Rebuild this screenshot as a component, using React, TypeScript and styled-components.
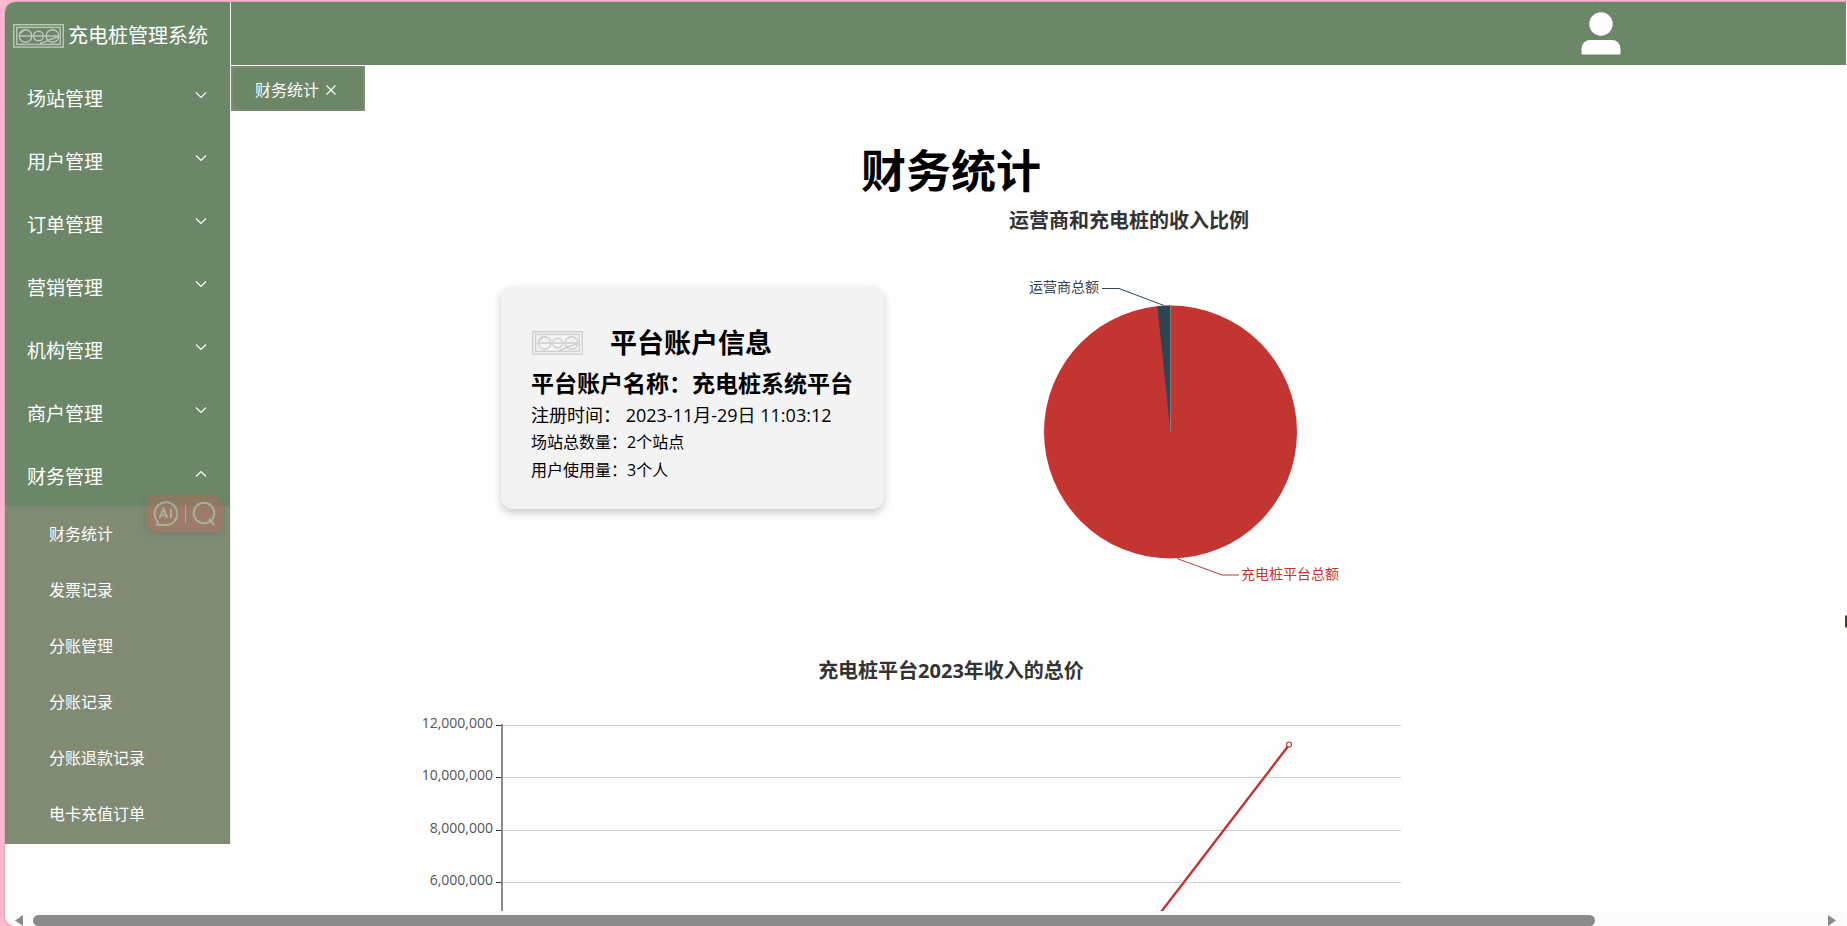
import React from 'react';
import styled, { createGlobalStyle } from 'styled-components';

const GlobalStyle = createGlobalStyle`
  *, *::before, *::after { box-sizing: border-box; }
  body {
    margin: 0;
    background: #ffb8cf;
    color: #000;
    font-family: "Open Sans", "Noto Sans CJK SC", sans-serif;
    font-size: 16px;
  }
  button { font: inherit; color: inherit; background: none; border: 0; padding: 0; cursor: pointer; }
  a { color: inherit; text-decoration: none; }
  h1, h2, h3, p, ul { margin: 0; padding: 0; }
  ul { list-style: none; }
`;

const green = '#6b8768';
const olive = '#818b74';

const Page = styled.div`
  height: 100vh;
  padding: 2px 0 0 5px;
`;

const Window = styled.div`
  display: flex;
  flex-direction: column;
  height: 100%;
  padding-right: 1px;
  overflow: hidden;
  background: #fefefe;
  border-radius: 10px 0 0 10px;
  box-shadow: 0 0 2px rgba(0, 0, 0, 0.35);
`;

const Shell = styled.div`
  display: flex;
  flex: 1;
  min-height: 0;
  overflow: hidden;
`;

const Sidebar = styled.aside`
  position: relative;
  flex: none;
  align-self: flex-start;
  width: 226px;
  border-right: 1px solid #f0eeec;
  background: ${green};
  background-clip: padding-box;
  color: #fff;
`;

const Brand = styled.div`
  display: flex;
  align-items: center;
  gap: 4px;
  height: 63px;
  padding: 4px 0 0 8px;
  font-size: 20px;
  line-height: 28px;
`;

const MenuButton = styled.button`
  display: flex;
  align-items: flex-start;
  justify-content: space-between;
  width: 100%;
  height: 63px;
  padding: 20px 23px 0 22px;
  font-size: 19px;
  line-height: 28px;
  text-align: left;

  svg { margin-top: 4px; }
`;

const SubMenu = styled.ul`
  padding-bottom: 2px;
  background: ${olive};
`;

const SubLink = styled.a`
  display: block;
  height: 56px;
  padding-left: 44px;
  line-height: 56px;
`;

const Assist = styled.div`
  position: absolute;
  right: 7px;
  top: 493px;
  display: flex;
  align-items: center;
  justify-content: space-between;
  width: 76px;
  height: 37px;
  padding: 0 7px 0 6px;
  border-radius: 3px 11px 8px 10px;
  background: rgba(240, 80, 68, 0.25);
  color: rgba(165, 195, 172, 0.75);
  box-shadow: 0 3px 8px rgba(80, 90, 60, 0.2);
`;

const AssistButton = styled.button`
  display: block;
  line-height: 0;
`;

const AssistDivider = styled.span`
  width: 1px;
  height: 18px;
  background: currentColor;
`;

const Column = styled.div`
  flex: 1;
  min-width: 0;
  display: flex;
  flex-direction: column;
`;

const TopBar = styled.header`
  display: flex;
  flex: none;
  align-items: center;
  justify-content: flex-end;
  height: 63px;
  padding-right: 225px;
  background: ${green};
`;

const UserButton = styled.button`
  display: block;
  line-height: 0;
`;

const Tabs = styled.nav`
  display: flex;
  flex: none;
  padding-top: 1px;
`;

const Tab = styled.div`
  display: flex;
  align-items: center;
  gap: 6px;
  width: 134px;
  height: 45px;
  padding: 2px 0 0 22px;
  border: 2px solid ${olive};
  background: ${green};
  color: #fff;
  line-height: 24px;
`;

const CloseButton = styled.button`
  line-height: 0;
`;

const Content = styled.main`
  max-width: 1440px;
  padding-top: 35px;
  overflow: hidden;
`;

const Title = styled.h1`
  font-size: 45px;
  line-height: 50px;
  text-align: center;
`;

const Overview = styled.section`
  display: flex;
  align-items: center;
  justify-content: center;
  gap: 55px;
`;

const Card = styled.article`
  width: 383px;
  height: 223px;
  padding: 36px 0 25px 30px;
  border-radius: 12px;
  background: #f3f3f3;
  box-shadow: 0 4px 8px rgba(0, 0, 0, 0.2);
  white-space: nowrap;
`;

const CardHead = styled.div`
  display: flex;
  align-items: center;
  gap: 27px;
  padding-left: 1px;
`;

const CardTitle = styled.h2`
  font-size: 27px;
  line-height: 42px;
`;

const AccountName = styled.h3`
  font-size: 23px;
  line-height: 38px;
`;

const Registered = styled.p`
  font-size: 18px;
  line-height: 26px;
  white-space: pre;
`;

const Fact = styled.p`
  line-height: 28px;
`;

const Chart = styled.svg`
  display: block;
  flex: none;
`;

const ChartTitle = styled.text`
  fill: #333;
  font-size: 20px;
  font-weight: 700;
  text-anchor: middle;
`;

const ChartLabel = styled.text`
  font-size: 14px;
`;

const Trend = styled.section`
  display: flex;
  justify-content: center;
  padding-top: 47px;
`;

const ScrollBar = styled.div`
  display: flex;
  flex: none;
  align-items: flex-end;
  gap: 10px;
  height: 15px;
  padding: 0 10px;
  background: #fcfcfc;
`;

const Track = styled.div`
  display: flex;
  flex: 1;
`;

const Thumb = styled.div`
  flex: 7;
  height: 11px;
  border-radius: 6px;
  background: #8b8b8b;
`;

const ThumbRest = styled.div`
  flex: 1;
`;

const EdgeHandle = styled.div`
  position: fixed;
  right: 0;
  top: 615px;
  width: 2px;
  height: 13px;
  border-radius: 2px 0 0 2px;
  background: #4a3833;
`;

function Logo({ color }: { color: string }) {
  return (
    <svg width="51" height="24" viewBox="0 0 51 24" fill="none" stroke={color} strokeWidth="1.4" aria-hidden="true">
      <rect x="0.7" y="0.7" width="49.6" height="22.4" />
      <rect x="3.7" y="3.4" width="43.6" height="17" />
      <circle cx="12.5" cy="12" r="6.3" />
      <circle cx="25.5" cy="12" r="4.8" />
      <circle cx="39.5" cy="12" r="6.3" />
      <path d="M6 12H46M6.5 10L12 5.5M27 19.5C32 18.5 39 14 46 12.5" />
    </svg>
  );
}

function Chevron({ up }: { up?: boolean }) {
  return (
    <svg width="12" height="12" viewBox="0 0 12 12" fill="none" stroke="#fff" strokeWidth="1.1" aria-hidden="true">
      <path d={up ? 'M1 9.5L6 4.5L11 9.5' : 'M1 3.5L6 8.5L11 3.5'} />
    </svg>
  );
}

const menus = ['场站管理', '用户管理', '订单管理', '营销管理', '机构管理', '商户管理', '财务管理'];
const subMenus = ['财务统计', '发票记录', '分账管理', '分账记录', '分账退款记录', '电卡充值订单'];

const ticks = [
  { y: 80, label: '12,000,000' },
  { y: 132, label: '10,000,000' },
  { y: 185, label: '8,000,000' },
  { y: 237, label: '6,000,000' },
];

function PieChart() {
  return (
    <Chart width="462" height="402" viewBox="0 0 462 402" role="img" aria-label="运营商和充电桩的收入比例">
      <ChartTitle x="190" y="32">运营商和充电桩的收入比例</ChartTitle>
      <circle cx="231.5" cy="236" r="126.5" fill="#c23531" />
      <path d="M231.5 236L218.3 110.2A126.5 126.5 0 0 1 231.5 109.5Z" fill="#2f4554" />
      <path d="M231.5 236V110" stroke="#7a7f86" />
      <path d="M163 92.5H180L225 109.5" fill="none" stroke="#2f4554" />
      <ChartLabel x="160" y="96" textAnchor="end" fill="#2f4554">运营商总额</ChartLabel>
      <path d="M238 362.5L283 379H300" fill="none" stroke="#c23531" />
      <ChartLabel x="302" y="383" fill="#c23531">充电桩平台总额</ChartLabel>
    </Chart>
  );
}

function LineChart() {
  return (
    <Chart width="1125" height="440" viewBox="0 0 1125 440" role="img" aria-label="充电桩平台2023年收入的总价">
      <ChartTitle x="562" y="33">充电桩平台2023年收入的总价</ChartTitle>
      {ticks.map((tick) => (
        <g key={tick.y}>
          <path d={`M113 ${tick.y + 0.5}H1012`} stroke="#ccc" />
          <path d={`M107 ${tick.y + 0.5}H113`} stroke="#333" />
          <ChartLabel x="104" y={tick.y + 3} textAnchor="end" fill="#555">{tick.label}</ChartLabel>
        </g>
      ))}
      <path d="M113 79V395" stroke="#8a8a8a" strokeWidth="2" />
      <path d="M224 395H674L900 100" fill="none" stroke="#c23531" strokeWidth="2.4" />
      <circle cx="900" cy="99.5" r="2.5" fill="#fff" stroke="#c23531" strokeWidth="1.2" />
    </Chart>
  );
}

export default function App() {
  return (
    <Page>
      <GlobalStyle />
      <Window>
        <Shell>
          <Sidebar>
            <Brand>
              <Logo color="#bcc6ba" />
              <span>充电桩管理系统</span>
            </Brand>
            <nav>
              {menus.map((name, i) => (
                <MenuButton key={name} type="button" aria-expanded={i === menus.length - 1}>
                  <span>{name}</span>
                  <Chevron up={i === menus.length - 1} />
                </MenuButton>
              ))}
              <SubMenu>
                {subMenus.map((name) => (
                  <li key={name}>
                    <SubLink href="#">{name}</SubLink>
                  </li>
                ))}
              </SubMenu>
            </nav>
            <Assist>
              <AssistButton type="button" aria-label="AI">
                <svg width="25" height="25" viewBox="0 0 25 25" fill="none" stroke="currentColor" strokeWidth="2">
                  <path d="M4 24H13A11.3 11.3 0 1 0 3.5 19L5 21L4 24Z" />
                  <path d="M6.5 17L10.5 8L14.5 17M8 14.2H13M18 8V17" />
                </svg>
              </AssistButton>
              <AssistDivider />
              <AssistButton type="button" aria-label="搜索">
                <svg width="24" height="25" viewBox="0 0 24 25" fill="none" stroke="currentColor" strokeWidth="2">
                  <circle cx="12" cy="12" r="10.3" />
                  <path d="M17 18L22 24" />
                </svg>
              </AssistButton>
            </Assist>
          </Sidebar>
          <Column>
            <TopBar>
              <UserButton type="button" aria-label="用户">
                <svg width="40" height="43" viewBox="0 0 40 43" fill="#fff">
                  <circle cx="20" cy="12" r="11.7" />
                  <path d="M0.5 41.5V36.5A8.5 8.5 0 0 1 9 28H31A8.5 8.5 0 0 1 39.5 36.5V41.5Q39.5 42.5 38.5 42.5H1.5Q0.5 42.5 0.5 41.5Z" />
                </svg>
              </UserButton>
            </TopBar>
            <Tabs>
              <Tab>
                <span>财务统计</span>
                <CloseButton type="button" aria-label="关闭">
                  <svg width="12" height="12" viewBox="0 0 12 12" stroke="#fff" strokeWidth="1.1">
                    <path d="M1.5 1.5L10.5 10.5M10.5 1.5L1.5 10.5" />
                  </svg>
                </CloseButton>
              </Tab>
            </Tabs>
            <Content>
              <Title>财务统计</Title>
              <Overview>
                <Card>
                  <CardHead>
                    <Logo color="#cdcecd" />
                    <CardTitle>平台账户信息</CardTitle>
                  </CardHead>
                  <AccountName>平台账户名称：充电桩系统平台</AccountName>
                  <Registered>注册时间： 2023-11月-29日 11:03:12</Registered>
                  <Fact>场站总数量：2个站点</Fact>
                  <Fact>用户使用量：3个人</Fact>
                </Card>
                <PieChart />
              </Overview>
              <Trend>
                <LineChart />
              </Trend>
            </Content>
          </Column>
        </Shell>
        <ScrollBar>
          <svg width="8" height="11" viewBox="0 0 8 11" fill="#8b8b8b" aria-hidden="true">
            <path d="M8 0V11L0 5.5Z" />
          </svg>
          <Track>
            <Thumb />
            <ThumbRest />
          </Track>
          <svg width="8" height="11" viewBox="0 0 8 11" fill="#8b8b8b" aria-hidden="true">
            <path d="M0 0V11L8 5.5Z" />
          </svg>
        </ScrollBar>
      </Window>
      <EdgeHandle />
    </Page>
  );
}
